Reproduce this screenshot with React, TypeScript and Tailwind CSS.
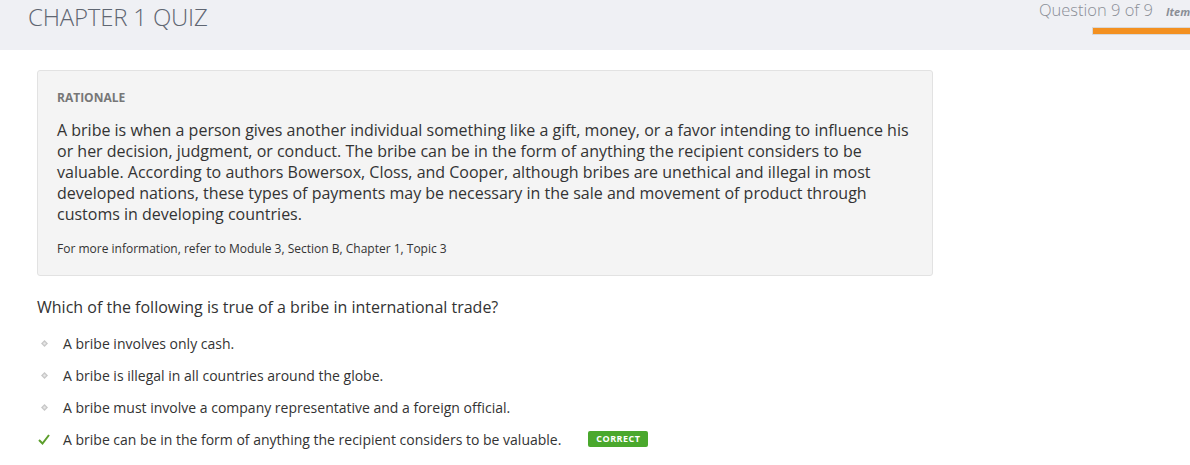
export default function App() {
    const options = [
        "A bribe involves only cash.",
        "A bribe is illegal in all countries around the globe.",
        "A bribe must involve a company representative and a foreign official.",
    ]

    return (
        <main className="w-[1190px] h-[465px] overflow-hidden bg-white font-['Open_Sans',sans-serif] text-[#333]">
            <header className="h-[50px] bg-[#eff0f4] flex justify-between overflow-hidden">
                <h1 className="pl-[28px] pt-0 text-[24px] leading-[34px] font-light text-[#5f6672] tracking-[-0.2px]">CHAPTER 1 QUIZ</h1>
                <div className="flex flex-col items-end">
                    <div className="flex items-baseline -mt-[2px]">
                        <span className="text-[16.5px] font-light text-[#8a8e96]">Question 9 of 9</span>
                        <span className="ml-[13px] text-[11px] font-bold italic text-[#8a8e96] w-[24px] overflow-hidden whitespace-nowrap">Items</span>
                    </div>
                    <div className="mt-[4px] w-[98px] h-[8px] bg-[#f39020] border border-[#d8d8d8] border-r-0" />
                </div>
            </header>

            <section className="pl-[37px] pt-[20px]">
                <div className="w-[896px] bg-[#f4f4f4] border border-[#e2e2e2] rounded-[3px] px-[19px] pt-[19px] pb-[18px]">
                    <div className="text-[12px] font-bold text-[#777] leading-[16px]">RATIONALE</div>
                    <p className="mt-[14px] text-[16px] leading-[21px] text-[#333]">
                        A bribe is when a person gives another individual something like a gift, money, or a favor intending to influence his or her decision, judgment, or conduct. The bribe can be in the form of anything the recipient considers to be valuable. According to authors Bowersox, Closs, and Cooper, although bribes are unethical and illegal in most developed nations, these types of payments may be necessary in the sale and movement of product through customs in developing countries.
                    </p>
                    <p className="mt-[16px] text-[12px] leading-[16px] text-[#333]">For more information, refer to Module 3, Section B, Chapter 1, Topic 3</p>
                </div>

                <h2 className="mt-[20px] text-[16px] leading-[22px] text-[#333]">Which of the following is true of a bribe in international trade?</h2>

                <ul className="mt-[15px] flex flex-col gap-[12px]">
                    {options.map((o) => (
                        <li key={o} className="flex items-center h-[20px] text-[14px] text-[#333]">
                            <span className="w-[26px] flex justify-start pl-[4px]">
                                <svg width="7" height="7" viewBox="0 0 7 7">
                                    <path d="M3.5 0 L7 3.5 L3.5 7 L0 3.5 Z" fill="#c8c8c8" />
                                    <circle cx="3.5" cy="3.5" r="1.2" fill="#e8e8e8" />
                                </svg>
                            </span>
                            {o}
                        </li>
                    ))}
                    <li className="flex items-center h-[20px] text-[14px] text-[#333]">
                        <span className="w-[26px] flex justify-start pl-[1px]">
                            <svg width="12" height="11" viewBox="0 0 12 11">
                                <path d="M1 6 L4.5 9.5 L11 1" stroke="#5c9e2c" strokeWidth="2" fill="none" />
                            </svg>
                        </span>
                        A bribe can be in the form of anything the recipient considers to be valuable.
                        <span className="ml-[27px] bg-[#4aa82d] text-white text-[9px] font-bold tracking-[0.5px] leading-[16px] h-[16px] w-[60px] text-center rounded-[2px]">CORRECT</span>
                    </li>
                </ul>
            </section>
        </main>
    )
}
